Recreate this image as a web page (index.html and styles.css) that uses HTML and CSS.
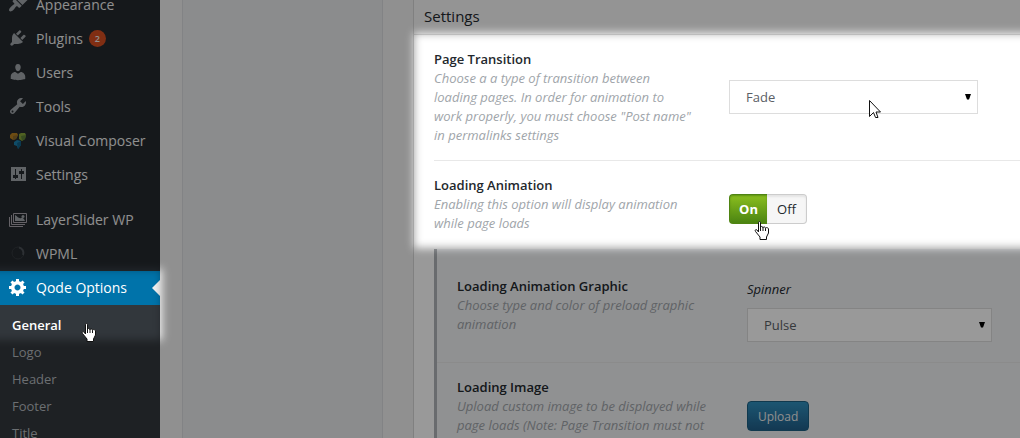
FILE: index.html
```html
<!DOCTYPE html>
<html lang="en">
<head>
<meta charset="utf-8">
<title>Qode Options</title>
<link rel="stylesheet" href="styles.css">
</head>
<body>
<div class="app">
  <nav class="sidebar" aria-label="Admin menu">
    <ul class="menu">
      <li><a class="menu-link" href="#"><svg class="icon" viewBox="0 0 20 20"><path d="M14.480 11.060 7.410 3.990l1.500-1.500c.5-.56 2.300-.47 3.510.32 1.210.8 1.430 1.280 2.910 2.100 1.180.64 2.450 1.260 4.450.850zm-.71.710L6.700 4.700 4.930 6.470c-.39.390-.39 1.020 0 1.410l1.060 1.060c.39.390.39 1.030 0 1.420-.6.6-1.430 1.110-2.210 1.690-.35.260-.7.530-1.010.840C1.430 14.230.4 16.080 1.400 17.070c.99 1 2.840-.030 4.180-1.360.31-.31.580-.66.850-1.020.57-.78 1.080-1.610 1.690-2.210.39-.39 1.020-.39 1.410 0l1.060 1.060c.39.390 1.020.39 1.410 0z"/></svg>Appearance</a></li>
      <li><a class="menu-link" href="#"><svg class="icon" viewBox="0 0 20 20"><path d="M13.110 4.360 9.870 7.600 8 5.730l3.240-3.240c.35-.34 1.050-.2 1.560.32.520.510.660 1.210.31 1.550zm-8 1.770.910-1.120 9.010 9.010-1.190.840c-.71.710-2.630 1.160-3.820 1.160H6.140L4.900 17.260c-.59.590-1.540.590-2.120 0-.59-.58-.59-1.530 0-2.120L4 13.900v-3.880c0-1.180.4-3.180 1.110-3.890zm7.260 3.970 3.240-3.240c.34-.35 1.040-.21 1.550.31.520.510.660 1.210.31 1.550l-3.240 3.250z"/></svg>Plugins<span class="badge">2</span></a></li>
      <li><a class="menu-link" href="#"><svg class="icon" viewBox="0 0 20 20"><path d="M10 9.250c-2.270 0-2.730-3.440-2.730-3.440C7 4.020 7.820 2 9.970 2c2.160 0 2.980 2.020 2.710 3.810 0 0-.41 3.440-2.680 3.440zm0 2.570L12.720 10c2.390 0 4.520 2.330 4.520 4.530v2.490s-3.650 1.130-7.240 1.130c-3.650 0-7.240-1.130-7.240-1.130v-2.490c0-2.250 1.940-4.480 4.470-4.480z"/></svg>Users</a></li>
      <li><a class="menu-link" href="#"><svg class="icon" viewBox="0 0 20 20"><path d="M16.680 9.770c-1.340 1.340-3.300 1.670-4.950.99l-5.410 6.520c-.99.990-2.590.990-3.580 0s-.99-2.590 0-3.570l6.520-5.420c-.68-1.650-.35-3.610.99-4.950 1.280-1.280 3.120-1.620 4.720-1.060l-2.890 2.890 2.820 2.820 2.860-2.870c.53 1.580.180 3.390-1.080 4.650zM3.810 16.210c.4.390 1.040.390 1.430 0 .4-.4.4-1.040 0-1.430-.39-.4-1.030-.4-1.430 0-.39.390-.39 1.030 0 1.430z"/></svg>Tools</a></li>
      <li><a class="menu-link" href="#"><svg class="icon" viewBox="0 0 20 20"><path fill="#b57d1f" d="M2 5 4 3l5 0 1 2-2 4-3 1-3-2z"/><path fill="#8a6a2a" d="m5 6 5-1-2 4-3 1z"/><path fill="#86a33a" d="m11 4 2-1h4l1 2-1 4-3 2-3-2z"/><path fill="#5d7f38" d="m13 6 5-1-1 4-3 2z"/><path fill="#1a7fae" d="m6 12 3-2 4 1 0 4-3 4-1-3-3-1z"/><path fill="#135f85" d="m9 13 4-2v4l-3 4z"/></svg>Visual Composer</a></li>
      <li><a class="menu-link" href="#"><svg class="icon" viewBox="0 0 20 20"><path fill-rule="evenodd" d="M3 3h15v14H3zM7 5v6H5v3h2v1h1v-1h2v-3H8V5zM13 5v2h-2v3h2v5h1v-5h2V7h-2V5z"/></svg>Settings</a></li>
      <li class="menu-gap"><a class="menu-link" href="#"><svg class="icon" viewBox="0 0 20 20"><path fill="none" stroke="#a9a4ac" d="M5.500 4.500h13v9h-13zM3.500 6v9.500H17M1.500 8v9.500H15"/><path d="M7 6c2 1 4 4 6 3s3 1 4 3H7z"/><circle cx="15" cy="7.500" r="1.500"/></svg>LayerSlider WP</a></li>
      <li><a class="menu-link" href="#"><svg class="icon" viewBox="0 0 20 20"><circle cx="10" cy="10" r="6" fill="none" stroke="#353a3f"/><path fill="none" stroke="#4b5157" stroke-width="2" d="M11 4.500a5.500 5.500 0 0 1 4 7.500"/></svg>WPML</a></li>
      <li><a class="menu-link is-active" href="#" aria-current="page"><svg class="icon" viewBox="0 0 20 20"><path d="M18 12h-2.180c-.17.7-.44 1.350-.81 1.930l1.540 1.540-2.100 2.100-1.540-1.540c-.58.360-1.230.63-1.910.79V19H8v-2.180c-.68-.16-1.330-.43-1.910-.79l-1.540 1.540-2.120-2.120 1.540-1.540c-.36-.58-.63-1.230-.79-1.910H1V9.030h2.170c.16-.7.440-1.350.8-1.940L2.430 5.550l2.100-2.100 1.540 1.540c.58-.37 1.240-.64 1.930-.81V2h3v2.180c.68.160 1.330.43 1.910.79l1.540-1.540 2.120 2.120-1.540 1.540c.36.590.64 1.240.8 1.940H18zm-8.500 1.500c1.660 0 3-1.340 3-3s-1.340-3-3-3-3 1.340-3 3 1.340 3 3 3z"/></svg>Qode Options</a>
        <ul class="submenu">
          <li><a class="sub-link is-current" href="#">General</a></li>
          <li><a class="sub-link" href="#">Logo</a></li>
          <li><a class="sub-link" href="#">Header</a></li>
          <li><a class="sub-link" href="#">Footer</a></li>
          <li><a class="sub-link" href="#">Title</a></li>
        </ul>
      </li>
    </ul>
  </nav>

  <div class="tabs-column"></div>

  <main class="panel">
    <h2 class="panel-title">Settings</h2>
    <section class="row row-transition">
      <div class="info">
        <label class="name" for="transition">Page Transition</label>
        <p class="desc">Choose a a type of transition between loading pages. In order for animation to work properly, you must choose "Post name" in permalinks settings</p>
      </div>
      <div class="select">
        <select id="transition"><option>Fade</option></select>
        <svg class="caret" viewBox="0 0 6 6"><path d="M0 0h6L4 5.500H2z"/></svg>
      </div>
    </section>
    <section class="row row-last">
      <div class="info">
        <h3 class="name">Loading Animation</h3>
        <p class="desc">Enabling this option will display animation while page loads</p>
      </div>
      <div class="toggle" role="radiogroup" aria-label="Loading Animation">
        <input type="radio" name="loading" id="loading-on" checked><label for="loading-on">On</label>
        <input type="radio" name="loading" id="loading-off"><label for="loading-off">Off</label>
      </div>
    </section>
    <div class="nested">
      <section class="row row-graphic">
        <div class="info">
          <h3 class="name">Loading Animation Graphic</h3>
          <p class="desc">Choose type and color of preload graphic animation</p>
        </div>
        <div class="field">
          <label class="field-label" for="spinner">Spinner</label>
          <div class="select">
            <select id="spinner"><option>Pulse</option></select>
            <svg class="caret" viewBox="0 0 6 6"><path d="M0 0h6L4 5.500H2z"/></svg>
          </div>
        </div>
      </section>
      <section class="row row-image">
        <div class="info">
          <h3 class="name">Loading Image</h3>
          <p class="desc">Upload custom image to be displayed while page loads (Note: Page Transition must not</p>
        </div>
        <button class="upload" type="button">Upload</button>
      </section>
    </div>
  </main>
</div>

<svg class="shade" aria-hidden="true">
  <defs>
    <filter id="soft" filterUnits="userSpaceOnUse" x="-40" y="-40" width="4000" height="3000"><feGaussianBlur stdDeviation="4"/></filter>
    <mask id="spots" maskUnits="userSpaceOnUse" x="0" y="0" width="100%" height="100%">
      <rect width="100%" height="100%" fill="#fff"/>
      <g filter="url(#soft)">
        <rect x="-30" y="269" width="192" height="71"/>
        <rect x="414" y="33" width="3000" height="215"/>
      </g>
    </mask>
  </defs>
  <rect width="100%" height="100%" fill-opacity=".4" mask="url(#spots)"/>
</svg>

<svg class="pointer pointer-arrow" viewBox="0 0 13 20" aria-hidden="true"><path d="M1.500 1.500v16l4-4 2 5h2.500l-2-5.500h4.500z"/></svg>
<svg class="pointer pointer-toggle" viewBox="0 0 16 20" aria-hidden="true"><path d="M4.500 11V2c0-2 2-2 2 0v4.500c0-1.500 2.500-1.500 2.500.500 0-1.500 2.500-1.500 2.500.500 0-1.500 3-1 3 .5v4l-2 4v2.500H6V16l-4.500-5.500c-1-1.500.5-2.500 1.500-1.500z"/><path d="M6.500 6v4M9 7v3M11.500 7.500V10"/></svg>
<svg class="pointer pointer-menu" viewBox="0 0 16 20" aria-hidden="true"><path d="M4.500 11V2c0-2 2-2 2 0v4.500c0-1.500 2.500-1.500 2.500.500 0-1.500 2.500-1.500 2.500.500 0-1.500 3-1 3 .5v4l-2 4v2.500H6V16l-4.500-5.500c-1-1.500.5-2.500 1.500-1.500z"/><path d="M6.500 6v4M9 7v3M11.500 7.500V10"/></svg>
</body>
</html>
```

FILE: styles.css
```css
* { box-sizing: border-box; }

body {
  margin: 0;
  height: 100vh;
  overflow: hidden;
  background: #f1f1f1;
  color: #23282d;
  font: 13px/19px "Open Sans", sans-serif;
}

ul, h2, h3, p { margin: 0; padding: 0; list-style: none; }

.app { display: flex; height: 100%; }

/* Admin menu */
.sidebar {
  flex: 0 0 160px;
  background: #23282d;
}

/* The menu is scrolled so that its first row is partly hidden. */
.menu { margin-top: -12px; }

.menu-gap { margin-top: 11px; }

.menu-link {
  display: flex;
  align-items: center;
  gap: 8px;
  height: 34px;
  padding: 0 0 2px 8px;
  color: #eee;
  font-size: 14px;
  text-decoration: none;
}

.icon { width: 20px; height: 20px; fill: #a0a5aa; }

.badge {
  width: 17px;
  height: 17px;
  margin-left: -2px;
  border-radius: 50%;
  background: #d54e21;
  font-size: 9px;
  font-weight: 600;
  line-height: 17px;
  text-align: center;
}

.menu-link.is-active {
  position: relative;
  background: #0073aa;
  color: #fff;
}

.is-active .icon { fill: #fff; }

.menu-link.is-active::after {
  content: "";
  position: absolute;
  right: 0;
  top: 9px;
  border: 8px solid transparent;
  border-left: 0;
  border-right-color: #f1f1f1;
}

.submenu {
  padding: 7px 0;
  background: #32373c;
}

.sub-link {
  display: block;
  padding: 4px 12px;
  color: #b4b9be;
  text-decoration: none;
}

.sub-link.is-current { color: #fff; font-weight: 600; }

/* Tab column */
.tabs-column {
  flex: 0 0 201px;
  margin: 0 30px 0 22px;
  border: solid #d9dbde;
  border-width: 0 1px;
  background: #e8eaec;
}

/* Settings panel */
.panel {
  flex: 1;
  min-width: 0;
  border-left: 1px solid #d5d5d5;
  background: #fff;
}

.panel-title {
  padding: 7px 10px 8px;
  border-bottom: 1px solid #ddd;
  background: #f7f7f7;
  font-size: 15px;
  font-weight: 400;
}

.row {
  display: grid;
  grid-template-columns: 295px minmax(0, 1fr);
  align-items: start;
  margin-left: 20px;
  padding: 15px 42px 15px 0;
  border-bottom: 1px solid #e8e8e8;
}

.row-transition .select { margin-top: 30px; }

.row-last { padding-bottom: 16px; border-bottom: 0; }

.info { max-width: 260px; }

.name { display: block; font-size: 13px; font-weight: 600; }

.desc { color: #a0a5aa; font-style: italic; }

.select { position: relative; }

.select select {
  display: block;
  width: 100%;
  height: 34px;
  padding: 0 16px;
  border: 1px solid #ddd;
  border-radius: 0;
  appearance: none;
  background: #fff;
  color: #5b6065;
  font: inherit;
}

.caret {
  position: absolute;
  top: 14px;
  right: 7px;
  width: 6px;
  height: 6px;
  pointer-events: none;
}

/* On / off switch */
.toggle { display: flex; padding-top: 18px; }

.toggle input { position: absolute; opacity: 0; }

.toggle label {
  width: 40px;
  height: 30px;
  border: 1px solid #ccc;
  border-radius: 0 4px 4px 0;
  border-left: 0;
  background: #f6f6f6;
  box-shadow: inset 0 2px 2px #e4e4e4;
  line-height: 28px;
  text-align: center;
}

.toggle input:checked + label {
  width: 38px;
  border: 1px solid #4f8412;
  border-right: 0;
  border-radius: 4px 0 0 4px;
  background: linear-gradient(#8bbf1f, #4b8412);
  box-shadow: inset 0 1px 2px #5d9214;
  color: #fff;
  font-weight: 700;
}

/* Dependent options */
.nested {
  margin-left: 20px;
  border-left: 3px solid #afb3b7;
  background: #f0f2f4;
}

.nested .row {
  grid-template-columns: 290px minmax(0, 1fr);
  margin-left: 0;
  padding: 15px 28px 15px 20px;
}

.nested .row-graphic { padding-top: 28px; padding-bottom: 20px; }

.field-label {
  display: block;
  padding: 3px 0 9px;
  font-style: italic;
}

.upload {
  justify-self: start;
  height: 30px;
  margin-top: 23px;
  padding: 0 10px;
  border: 1px solid #1b6083;
  border-radius: 4px;
  background: linear-gradient(#2f8fbe, #215f89);
  color: #eee;
  font: inherit;
  font-size: 12px;
}

/* Dimmed layer with two lit areas */
.shade {
  position: fixed;
  inset: 0;
  width: 100%;
  height: 100%;
  pointer-events: none;
}

/* Mouse pointers */
.pointer {
  position: absolute;
  width: 16px;
  height: 20px;
  fill: #fff;
  stroke: #111;
  pointer-events: none;
}

.pointer-arrow { left: 868px; top: 99px; width: 13px; }
.pointer-toggle { left: 754px; top: 221px; }
.pointer-menu { left: 81px; top: 323px; }
```
